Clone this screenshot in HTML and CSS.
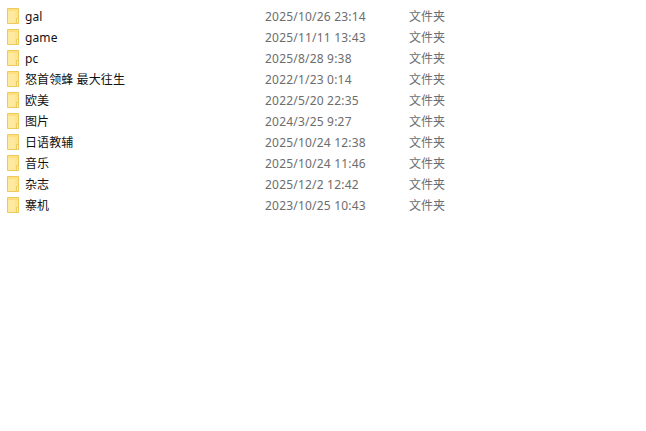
FILE: index.html
```html
<!DOCTYPE html>
<html lang="zh-CN">
<head>
  <meta charset="utf-8">
  <title>文件夹</title>
  <link rel="stylesheet" href="styles.css">
</head>
<body>
  <svg class="defs" width="0" height="0">
    <symbol id="folder" viewBox="0 0 12 16">
      <path d="M.5.5h11v15H.5z" fill="#ffe48e" stroke="#ecca5c"/>
      <path d="M1 1h10v2H1z" fill="#ffdf80"/>
      <path d="M1 3h7v12H1z" fill="#ffe99f"/>
      <path d="M9.5 10.5h2v5h-2z" fill="#fff1bd" stroke="#ecca5c"/>
    </symbol>
  </svg>
  <div class="file-list">
    <div class="row">
      <div class="name"><svg class="icon"><use href="#folder"/></svg><span>gal</span></div>
      <div class="date">2025/10/26 23:14</div>
      <div class="type">文件夹</div>
    </div>
    <div class="row">
      <div class="name"><svg class="icon"><use href="#folder"/></svg><span>game</span></div>
      <div class="date">2025/11/11 13:43</div>
      <div class="type">文件夹</div>
    </div>
    <div class="row">
      <div class="name"><svg class="icon"><use href="#folder"/></svg><span>pc</span></div>
      <div class="date">2025/8/28 9:38</div>
      <div class="type">文件夹</div>
    </div>
    <div class="row">
      <div class="name"><svg class="icon"><use href="#folder"/></svg><span class="cjk">怒首领蜂 最大往生</span></div>
      <div class="date">2022/1/23 0:14</div>
      <div class="type">文件夹</div>
    </div>
    <div class="row">
      <div class="name"><svg class="icon"><use href="#folder"/></svg><span class="cjk">欧美</span></div>
      <div class="date">2022/5/20 22:35</div>
      <div class="type">文件夹</div>
    </div>
    <div class="row">
      <div class="name"><svg class="icon"><use href="#folder"/></svg><span class="cjk">图片</span></div>
      <div class="date">2024/3/25 9:27</div>
      <div class="type">文件夹</div>
    </div>
    <div class="row">
      <div class="name"><svg class="icon"><use href="#folder"/></svg><span class="cjk">日语教辅</span></div>
      <div class="date">2025/10/24 12:38</div>
      <div class="type">文件夹</div>
    </div>
    <div class="row">
      <div class="name"><svg class="icon"><use href="#folder"/></svg><span class="cjk">音乐</span></div>
      <div class="date">2025/10/24 11:46</div>
      <div class="type">文件夹</div>
    </div>
    <div class="row">
      <div class="name"><svg class="icon"><use href="#folder"/></svg><span class="cjk">杂志</span></div>
      <div class="date">2025/12/2 12:42</div>
      <div class="type">文件夹</div>
    </div>
    <div class="row">
      <div class="name"><svg class="icon"><use href="#folder"/></svg><span class="cjk">寨机</span></div>
      <div class="date">2023/10/25 10:43</div>
      <div class="type">文件夹</div>
    </div>
  </div>
</body>
</html>
```

FILE: styles.css
```css
* {
  box-sizing: border-box;
  margin: 0;
  padding: 0;
}

body {
  background: white;
  font-family: "Noto Sans", "Noto Sans CJK SC", sans-serif;
  font-size: 12px;
}

.defs {
  display: block;
}

.file-list {
  padding: 6px 0 0 7px;
}

.row {
  display: flex;
  align-items: center;
  height: 21px;
}

.name {
  display: flex;
  align-items: center;
  width: 258px;
  color: #111;
  letter-spacing: 0.1px;
}

.icon {
  width: 12px;
  height: 16px;
  margin: 0 6px 1px 0;
  flex-shrink: 0;
}

/* CJK glyphs sit a pixel low against the latin ones */
.cjk {
  margin-bottom: 2px;
}

.date {
  width: 144px;
  color: #6d6d6d;
  letter-spacing: 0.2px;
}

.type {
  margin-bottom: 2px;
  color: #6d6d6d;
}
```
